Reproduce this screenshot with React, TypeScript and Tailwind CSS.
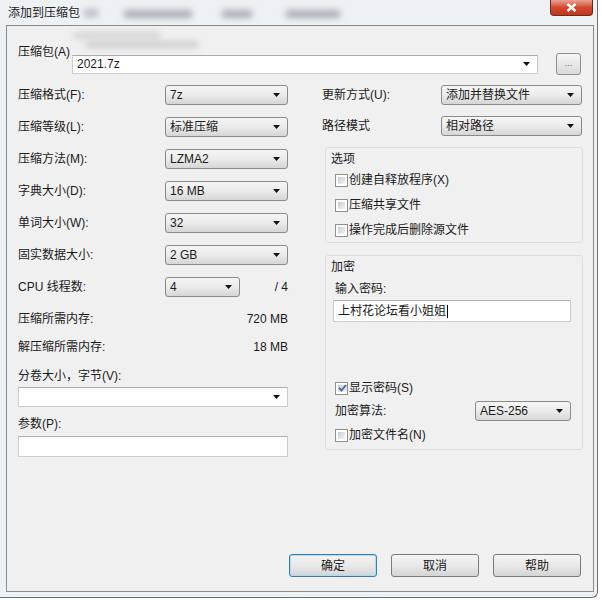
import React from "react";
import clsx from "clsx";

const Arrow = () => (
  <svg width="7" height="4" viewBox="0 0 7 4" className="shrink-0">
    <polygon points="0,0 7,0 3.5,4" fill="#111" />
  </svg>
);

const Select = ({ value, className }: { value: string; className?: string }) => (
  <div
    className={clsx(
      "h-5 flex items-center justify-between pl-[4px] pr-[7px] border border-[#8a8a8a] rounded-[3px] bg-linear-to-b from-[#f6f6f6] via-[#ebebeb] to-[#d6d6d6]",
      className
    )}
  >
    <span className="truncate">{value}</span>
    <Arrow />
  </div>
);

const Combo = ({ value, className }: { value?: string; className?: string }) => (
  <div
    className={clsx(
      "flex items-center justify-between pl-[4px] pr-[7px] bg-white border border-[#c9cdd3] border-t-[#abadb3]",
      className
    )}
  >
    <span>{value}</span>
    <Arrow />
  </div>
);

const Check = ({ checked, label }: { checked?: boolean; label: string }) => (
  <div className="flex items-center h-4">
    <span className="w-[13px] h-[13px] border border-[#8f8f8f] bg-white p-[2px] flex shrink-0">
      <span className="flex-1 flex items-center justify-center bg-linear-to-br from-[#c9cdd3] to-[#f4f4f4]">
        {checked && (
          <svg width="9" height="8" viewBox="0 0 9 8">
            <path d="M1 4 L3.5 6.5 L8 1" stroke="#4a63a4" strokeWidth="1.8" fill="none" />
          </svg>
        )}
      </span>
    </span>
    <span className="ml-[1px]">{label}</span>
  </div>
);

const Btn = ({ label, primary }: { label: string; primary?: boolean }) => (
  <button
    className={clsx(
      "w-[88px] h-[23px] rounded-[3px] border bg-linear-to-b from-[#f4f4f4] via-[#e9e9e9] to-[#d4d4d4]",
      primary ? "border-[#3d7bad] shadow-[inset_0_0_0_1px_#a9dcf6]" : "border-[#7a7a7a]"
    )}
  >
    {label}
  </button>
);

const Row = ({ label, children }: { label: string; children: React.ReactNode }) => (
  <div className="h-5 flex items-center">
    <span className="w-[147px] shrink-0">{label}</span>
    {children}
  </div>
);

export default function App() {
  return (
    <div className="w-[602px] h-[600px] bg-white overflow-hidden text-[12px] leading-4 text-[#1a1a1a] font-['Liberation_Sans','Noto_Sans_CJK_SC',sans-serif]">
      <div className="w-[598px] h-[598px] flex flex-col rounded-br-[6px] border-r border-b border-[#6f6f6f] bg-[#eef1f4]">
        {/* title bar */}
        <div className="h-[25px] relative flex items-center pl-[8px] shrink-0">
          <span className="text-[#222] relative z-10">添加到压缩包</span>
          <span className="absolute left-[84px] top-[9px] w-[14px] h-[8px] bg-[#b8bec6] blur-[3px]" />
          <span className="absolute left-[124px] top-[10px] w-[68px] h-[8px] bg-[#a9afb7] blur-[3px]" />
          <span className="absolute left-[222px] top-[10px] w-[30px] h-[8px] bg-[#a9afb7] blur-[3px]" />
          <span className="absolute left-[286px] top-[10px] w-[54px] h-[8px] bg-[#a9afb7] blur-[3px]" />
          <div className="absolute right-[4px] top-0 w-[43px] h-[16px] rounded-b-[4px] border border-t-0 border-[#6b2a1e] bg-linear-to-b from-[#e8a291] via-[#d0492f] to-[#c3361a] flex items-center justify-center">
            <svg width="11" height="9" viewBox="0 0 11 9">
              <path d="M1.5 1 L9.5 8 M9.5 1 L1.5 8" stroke="#fff" strokeWidth="2.4" />
            </svg>
          </div>
        </div>

        {/* client */}
        <div className="flex-1 ml-[6px] mr-[3px] mb-[5px] border border-[#8c8c8c] bg-[#f0f0f0] flex flex-col">
          <div className="flex items-start pl-[11px]">
            <div className="w-[54px] mt-[18px]">压缩包(A)</div>
            <div className="flex flex-col">
              <div className="h-[27px] relative">
                <span className="absolute left-[2px] top-[6px] w-[86px] h-[7px] bg-[#d4d4d4] blur-[3px]" />
                <span className="absolute left-[14px] top-[15px] w-[112px] h-[7px] bg-[#cfcfcf] blur-[3px]" />
              </div>
              <div className="flex items-center">
                <Combo value="2021.7z" className="w-[466px] h-[19px]" />
                <button className="ml-[18px] w-[25px] h-[22px] rounded-[3px] border border-[#8e8e8e] bg-linear-to-b from-[#f6f6f6] to-[#dadada] text-[9px] leading-none text-[#555] pb-[2px]">
                  ...
                </button>
              </div>
            </div>
          </div>

          <div className="flex mt-[10px] pl-[11px]">
            {/* left column */}
            <div className="w-[270px] flex flex-col">
              <div className="flex flex-col gap-3">
                <Row label="压缩格式(F):">
                  <Select value="7z" className="w-[123px]" />
                </Row>
                <Row label="压缩等级(L):">
                  <Select value="标准压缩" className="w-[123px]" />
                </Row>
                <Row label="压缩方法(M):">
                  <Select value="LZMA2" className="w-[123px]" />
                </Row>
                <Row label="字典大小(D):">
                  <Select value="16 MB" className="w-[123px]" />
                </Row>
                <Row label="单词大小(W):">
                  <Select value="32" className="w-[123px]" />
                </Row>
                <Row label="固实数据大小:">
                  <Select value="2 GB" className="w-[123px]" />
                </Row>
                <Row label="CPU 线程数:">
                  <Select value="4" className="w-[75px]" />
                  <span className="ml-auto">/ 4</span>
                </Row>
                <div className="h-5 flex items-center justify-between">
                  <span>压缩所需内存:</span>
                  <span>720 MB</span>
                </div>
              </div>
              <div className="h-5 mt-2 flex items-center justify-between">
                <span>解压缩所需内存:</span>
                <span>18 MB</span>
              </div>
              <div className="h-5 mt-[9px] flex items-center">分卷大小，字节(V):</div>
              <Combo className="h-5 mt-px" />
              <div className="h-5 mt-[7px] flex items-center">参数(P):</div>
              <div className="h-[21px] mt-[2px] bg-white border border-[#c9cdd3] border-t-[#abadb3]" />
            </div>

            {/* right column */}
            <div className="w-[260px] ml-[34px] flex flex-col">
              <div className="h-5 flex items-center">
                <span className="w-[119px]">更新方式(U):</span>
                <Select value="添加并替换文件" className="w-[141px]" />
              </div>
              <div className="h-5 mt-[11px] flex items-center">
                <span className="w-[119px]">路径模式</span>
                <Select value="相对路径" className="w-[141px]" />
              </div>

              <div className="ml-[3px] w-[258px] h-[96px] mt-[11px] border border-[#dcdfe2] rounded-[3px] pl-[5px] pt-[1px]">
                <div className="h-4 mt-[2px]">选项</div>
                <div className="pl-[4px] mt-[5px] flex flex-col gap-[9px]">
                  <Check label="创建自释放程序(X)" />
                  <Check label="压缩共享文件" />
                  <Check label="操作完成后删除源文件" />
                </div>
              </div>

              <div className="ml-[3px] w-[258px] h-[195px] mt-[12px] border border-[#dcdfe2] rounded-[3px] pl-[5px] pt-[1px] flex flex-col">
                <div className="h-4 mt-[2px]">加密</div>
                <div className="h-4 mt-[6px] pl-[4px]">输入密码:</div>
                <div className="ml-[2px] w-[238px] h-[22px] mt-[3px] bg-white border border-[#c9cdd3] border-t-[#abadb3] flex items-center pl-[4px]">
                  上村花论坛看小姐姐
                  <span className="w-px h-[13px] bg-black ml-px" />
                </div>
                <div className="pl-[4px] mt-[58px]">
                  <Check checked label="显示密码(S)" />
                </div>
                <div className="h-5 mt-[5px] pl-[4px] flex items-center">
                  <span className="w-[140px]">加密算法:</span>
                  <Select value="AES-256" className="w-[96px]" />
                </div>
                <div className="pl-[4px] mt-[6px]">
                  <Check label="加密文件名(N)" />
                </div>
              </div>
            </div>
          </div>

          <div className="mt-auto mb-[14px] pr-[12px] flex justify-end gap-[14px]">
            <Btn label="确定" primary />
            <Btn label="取消" />
            <Btn label="帮助" />
          </div>
        </div>
      </div>
    </div>
  );
}
